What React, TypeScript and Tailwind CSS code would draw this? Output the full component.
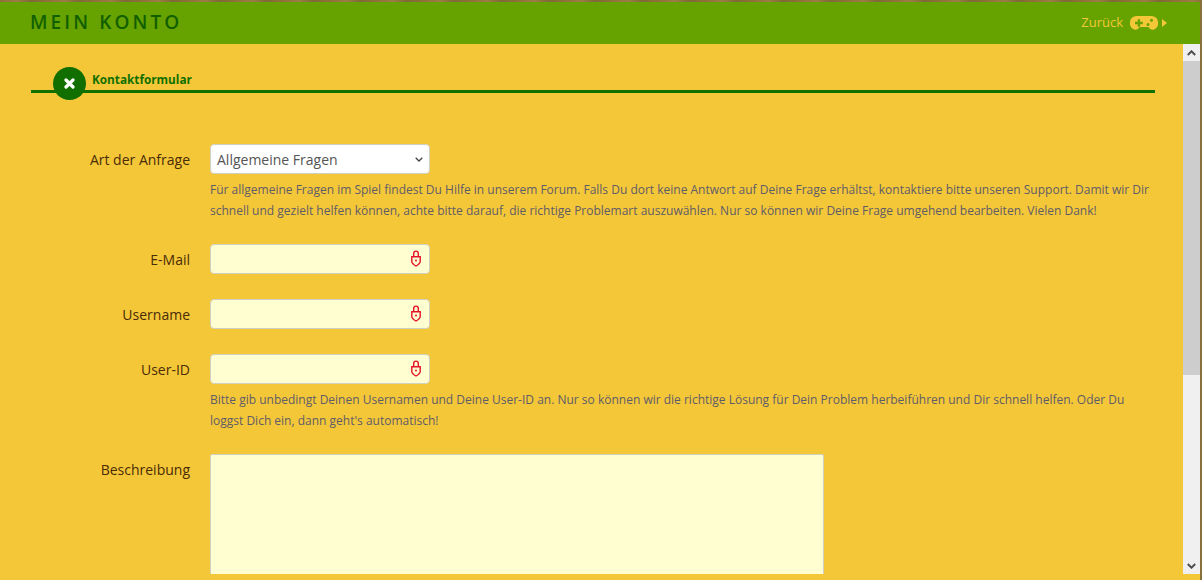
import React from 'react'

const font = { fontFamily: '"Open Sans", sans-serif' }

const LockIcon = () => (
  <svg width="10" height="17" viewBox="0 0 10 17" fill="none" className="absolute right-[9px] top-[6px]">
    <path d="M2.700 6.500V3.400a2.300 2.300 0 0 1 4.600 0v3.100" stroke="#e3122a" strokeWidth="1.400" />
    <path d="M.8 6.800h8.400v4.600c0 2-2.200 3.400-4.200 4.600C3 14.800.8 13.400.8 11.400z" stroke="#e3122a" strokeWidth="1.400" fill="#fffed0" />
    <circle cx="5" cy="10.500" r="1" fill="#e3122a" />
  </svg>
)

const GamepadIcon = () => (
  <svg width="28" height="14" viewBox="0 0 28 14" className="block">
    <path d="M7 0h14a7 7 0 0 1 3 13.400c-2.400.9-4.200-.3-5.600-2.400H9.600C8.200 13.100 6.400 14.300 4 13.400A7 7 0 0 1 7 0z" fill="#f4c738" />
    <path d="M5 5.800h2.700V3.200h2.400v2.600h2.700v2.400h-2.700v2.600H7.700V8.200H5z" fill="#66a300" />
    <circle cx="21.500" cy="4.300" r="1.500" fill="#66a300" />
    <circle cx="18" cy="8.500" r="1.500" fill="#66a300" />
  </svg>
)

const Field = ({ label }: { label: string }) => (
  <div className="flex items-center">
    <label className="w-[190px] shrink-0 text-right text-[14px] text-[#4a2c08]">{label}</label>
    <div className="relative ml-[20px] h-[30px] w-[220px]">
      <input className="h-full w-full rounded-[4px] border border-[#cfcfc4] bg-[#fffed0] outline-none" />
      <LockIcon />
    </div>
  </div>
)

const Hint = ({ children, className }: { children: React.ReactNode; className: string }) => (
  <p className={`ml-[210px] w-[942px] text-[12px] leading-[21px] text-[#5f5c68] ${className}`}>{children}</p>
)

export default function App() {
  return (
    <div className="flex h-[580px] w-[1202px] flex-col overflow-hidden bg-[repeating-linear-gradient(90deg,#8f7038_0,#9c7c45_17px,#7f6a36_31px,#8f7038_47px)] pt-[2px] pr-[2px]" style={font}>
      <header className="flex h-[42px] shrink-0 items-center justify-between bg-[#66a300] pl-[30px] pr-[33px]">
        <h1 className="mb-[2px] text-[19px] font-semibold tracking-[3.100px] text-[#125f00]">MEIN KONTO</h1>
        <a className="flex items-center text-[13px] text-[#f4c738]">
          Zurück
          <span className="ml-[7px]"><GamepadIcon /></span>
          <svg width="5" height="8" viewBox="0 0 5 8" className="ml-[4px]"><path d="M0 0l5 4-5 4z" fill="#f4c738" /></svg>
        </a>
      </header>

      <main className="flex min-h-0 flex-1 bg-[#f4c738] pb-[6px]">
        <div className="min-w-0 flex-1 overflow-hidden">
          <div className="relative ml-[31px] mr-[28px] mt-[28px] h-[21px] border-b-[3px] border-[#116f00]">
            <span className="absolute left-[22px] top-[-5px] flex h-[33px] w-[33px] items-center justify-center rounded-full bg-[#116f00]">
              <svg width="11" height="11" viewBox="0 0 11 11"><path d="M2 2l7 7M9 2l-7 7" stroke="#fff" strokeWidth="3.200" strokeLinecap="round" /></svg>
            </span>
            <span className="absolute left-[61px] top-[-1px] text-[11.750px] font-bold leading-[16px] text-[#116f00]">Kontaktformular</span>
          </div>

          <div className="mt-[51px] flex items-center">
            <label className="w-[190px] shrink-0 text-right text-[14px] text-[#4a2c08]">Art der Anfrage</label>
            <div className="relative ml-[20px] h-[30px] w-[220px]">
              <div className="flex h-full items-center justify-between rounded-[4px] border border-[#cfcfc4] bg-white pl-[6px] pr-[6px] text-[14px] text-[#555]">
                Allgemeine Fragen
                <svg width="8" height="5" viewBox="0 0 8 5" fill="none"><path d="M.7.7L4 4l3.300-3.300" stroke="#444" strokeWidth="1.300" /></svg>
              </div>
            </div>
          </div>
          <Hint className="mt-[5px]">
            Für allgemeine Fragen im Spiel findest Du Hilfe in unserem Forum. Falls Du dort keine Antwort auf Deine Frage erhältst, kontaktiere bitte unseren Support. Damit wir Dir schnell und gezielt helfen können, achte bitte darauf, die richtige Problemart auszuwählen. Nur so können wir Deine Frage umgehend bearbeiten. Vielen Dank!
          </Hint>

          <div className="mt-[23px] flex flex-col gap-[25px]">
            <Field label="E-Mail" />
            <Field label="Username" />
            <Field label="User-ID" />
          </div>
          <Hint className="mt-[5px]">
            Bitte gib unbedingt Deinen Usernamen und Deine User-ID an. Nur so können wir die richtige Lösung für Dein Problem herbeiführen und Dir schnell helfen. Oder Du loggst Dich ein, dann geht's automatisch!
          </Hint>

          <div className="mt-[23px] flex items-start">
            <label className="w-[190px] shrink-0 pt-[5px] text-right text-[14px] text-[#4a2c08]">Beschreibung</label>
            <textarea className="ml-[20px] h-[200px] w-[614px] shrink-0 resize-none rounded-[2px] border border-[#cfcfc4] bg-[#fffed0] outline-none" />
          </div>
        </div>

        <div className="flex w-[17px] shrink-0 flex-col bg-[#f0f0f0]">
          <div className="flex h-[17px] items-center justify-center">
            <svg width="9" height="6" viewBox="0 0 9 6" fill="none"><path d="M.8 5l3.700-3.700L8.200 5" stroke="#505050" strokeWidth="2" /></svg>
          </div>
          <div className="h-[314px] bg-[#cdcdcd]" />
          <div className="flex-1" />
          <div className="flex h-[17px] items-center justify-center">
            <svg width="9" height="6" viewBox="0 0 9 6" fill="none"><path d="M.8 1l3.700 3.700L8.200 1" stroke="#505050" strokeWidth="2" /></svg>
          </div>
        </div>
      </main>
    </div>
  )
}
